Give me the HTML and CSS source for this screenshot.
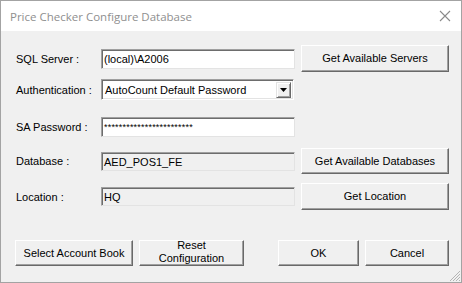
FILE: index.html
```html
<!DOCTYPE html>
<html>

<head>
    <link rel="stylesheet" href="styles.css">
</head>

<body>
    <div class="window">
        <div class="titlebar">
            <span class="title">Price Checker Configure Database</span>
            <svg class="close" width="12" height="12" viewBox="0 0 12 12">
                <path d="M1 1L11 11M11 1L1 11" stroke="#8a8a8a" stroke-width="1.1" fill="none"/>
            </svg>
        </div>
        <div class="client">
            <div class="row row1">
                <span class="label">SQL Server :</span>
                <div class="field">(local)\A2006</div>
                <div class="button wide">Get Available Servers</div>
            </div>
            <div class="row row2">
                <span class="label">Authentication :</span>
                <div class="combo">
                    <span class="combo-text">AutoCount Default Password</span>
                    <span class="drop"><svg width="7" height="4" viewBox="0 0 7 4"><path d="M0 0H7L3.5 4Z" fill="#000"/></svg></span>
                </div>
            </div>
            <div class="row row3">
                <span class="label">SA Password :</span>
                <div class="field pwd">************************</div>
            </div>
            <div class="row row4">
                <span class="label">Database :</span>
                <div class="field readonly">AED_POS1_FE</div>
                <div class="button wide">Get Available Databases</div>
            </div>
            <div class="row row5">
                <span class="label">Location :</span>
                <div class="field readonly">HQ</div>
                <div class="button wide">Get Location</div>
            </div>
            <div class="row bottom">
                <div class="button book">Select Account Book</div>
                <div class="button reset">Reset<br>Configuration</div>
                <div class="spacer"></div>
                <div class="button ok">OK</div>
                <div class="button cancel">Cancel</div>
            </div>
            <svg class="grip" width="12" height="12" viewBox="0 0 12 12">
                <path d="M11 1L1 11M11 4L4 11M11 7L7 11M11 10L10 11" stroke="#b4b4b4" stroke-width="1" fill="none"/>
            </svg>
        </div>
    </div>
</body>

</html>
```

FILE: styles.css
```css
body {
    margin: 0;
    background: #fff;
}

.window {
    position: relative;
    width: 462px;
    height: 283px;
    box-sizing: border-box;
    border: 1px solid #a3a3a3;
    font-family: "Liberation Sans", Arial, sans-serif;
    font-size: 11px;
    color: #000;
}

.titlebar {
    height: 30px;
    background: #fff;
    display: flex;
    align-items: center;
    padding-left: 9px;
    padding-right: 9px;
}

.title {
    font-family: "Open Sans", "Noto Sans", sans-serif;
    font-size: 11.5px;
    color: #8f8f8f;
    flex: 1;
}

.close {
    margin-right: 1px;
}

.client {
    position: relative;
    height: 251px;
    background: #f0f0f0;
    padding-left: 14px;
    box-sizing: border-box;
    padding-top: 14px;
}

.row {
    display: flex;
    align-items: center;
}

.row1 {
    height: 27px;
}

.row2 {
    height: 21px;
    margin-top: 7px;
}

.row3 {
    height: 20px;
    margin-top: 17px;
}

.row4 {
    height: 26px;
    margin-top: 11px;
}

.row5 {
    height: 27px;
    margin-top: 9px;
}

.bottom {
    height: 26px;
    margin-top: 30px;
    width: 434px;
}

.label {
    width: 86px;
    padding-left: 1px;
    box-sizing: border-box;
}

.field {
    width: 194px;
    height: 20px;
    box-sizing: border-box;
    background: #fff;
    border-top: 1px solid #a0a0a0;
    border-left: 1px solid #a0a0a0;
    border-right: 1px solid #e3e3e3;
    border-bottom: 1px solid #e3e3e3;
    box-shadow: inset 1px 1px 0 #6d6d6d;
    padding-left: 2px;
    line-height: 18px;
}

.field.readonly {
    background: #f0f0f0;
    height: 19px;
}

.pwd {
    font-size: 9px;
    letter-spacing: 0.2px;
}

.combo {
    width: 193px;
    height: 21px;
    box-sizing: border-box;
    background: #fff;
    border-top: 1px solid #a0a0a0;
    border-left: 1px solid #a0a0a0;
    border-right: 1px solid #fff;
    border-bottom: 1px solid #fff;
    box-shadow: inset 1px 1px 0 #6d6d6d, inset -1px -1px 0 #e3e3e3;
    display: flex;
    align-items: center;
    padding: 2px;
}

.combo-text {
    flex: 1;
    padding-left: 1px;
}

.drop {
    width: 15px;
    height: 16px;
    box-sizing: border-box;
    background: #f0f0f0;
    border-top: 1px solid #e3e3e3;
    border-left: 1px solid #e3e3e3;
    border-right: 1px solid #696969;
    border-bottom: 1px solid #696969;
    box-shadow: inset 1px 1px 0 #fff, inset -1px -1px 0 #a0a0a0;
    display: flex;
    align-items: center;
    justify-content: center;
}

.button {
    box-sizing: border-box;
    height: 100%;
    background: #f0f0f0;
    border-top: 1px solid #fff;
    border-left: 1px solid #fff;
    border-right: 1px solid #696969;
    border-bottom: 1px solid #696969;
    box-shadow: inset -1px -1px 0 #a0a0a0;
    display: flex;
    align-items: center;
    justify-content: center;
    text-align: center;
    line-height: 13px;
}

.wide {
    width: 148px;
    margin-left: 6px;
}

.book {
    width: 118px;
}

.reset {
    width: 105px;
    margin-left: 6px;
    padding-bottom: 2px;
}

.spacer {
    flex: 1;
}

.ok {
    width: 81px;
}

.cancel {
    width: 84px;
    margin-left: 6px;
}

.grip {
    position: absolute;
    right: 0;
    bottom: 0;
}
```
